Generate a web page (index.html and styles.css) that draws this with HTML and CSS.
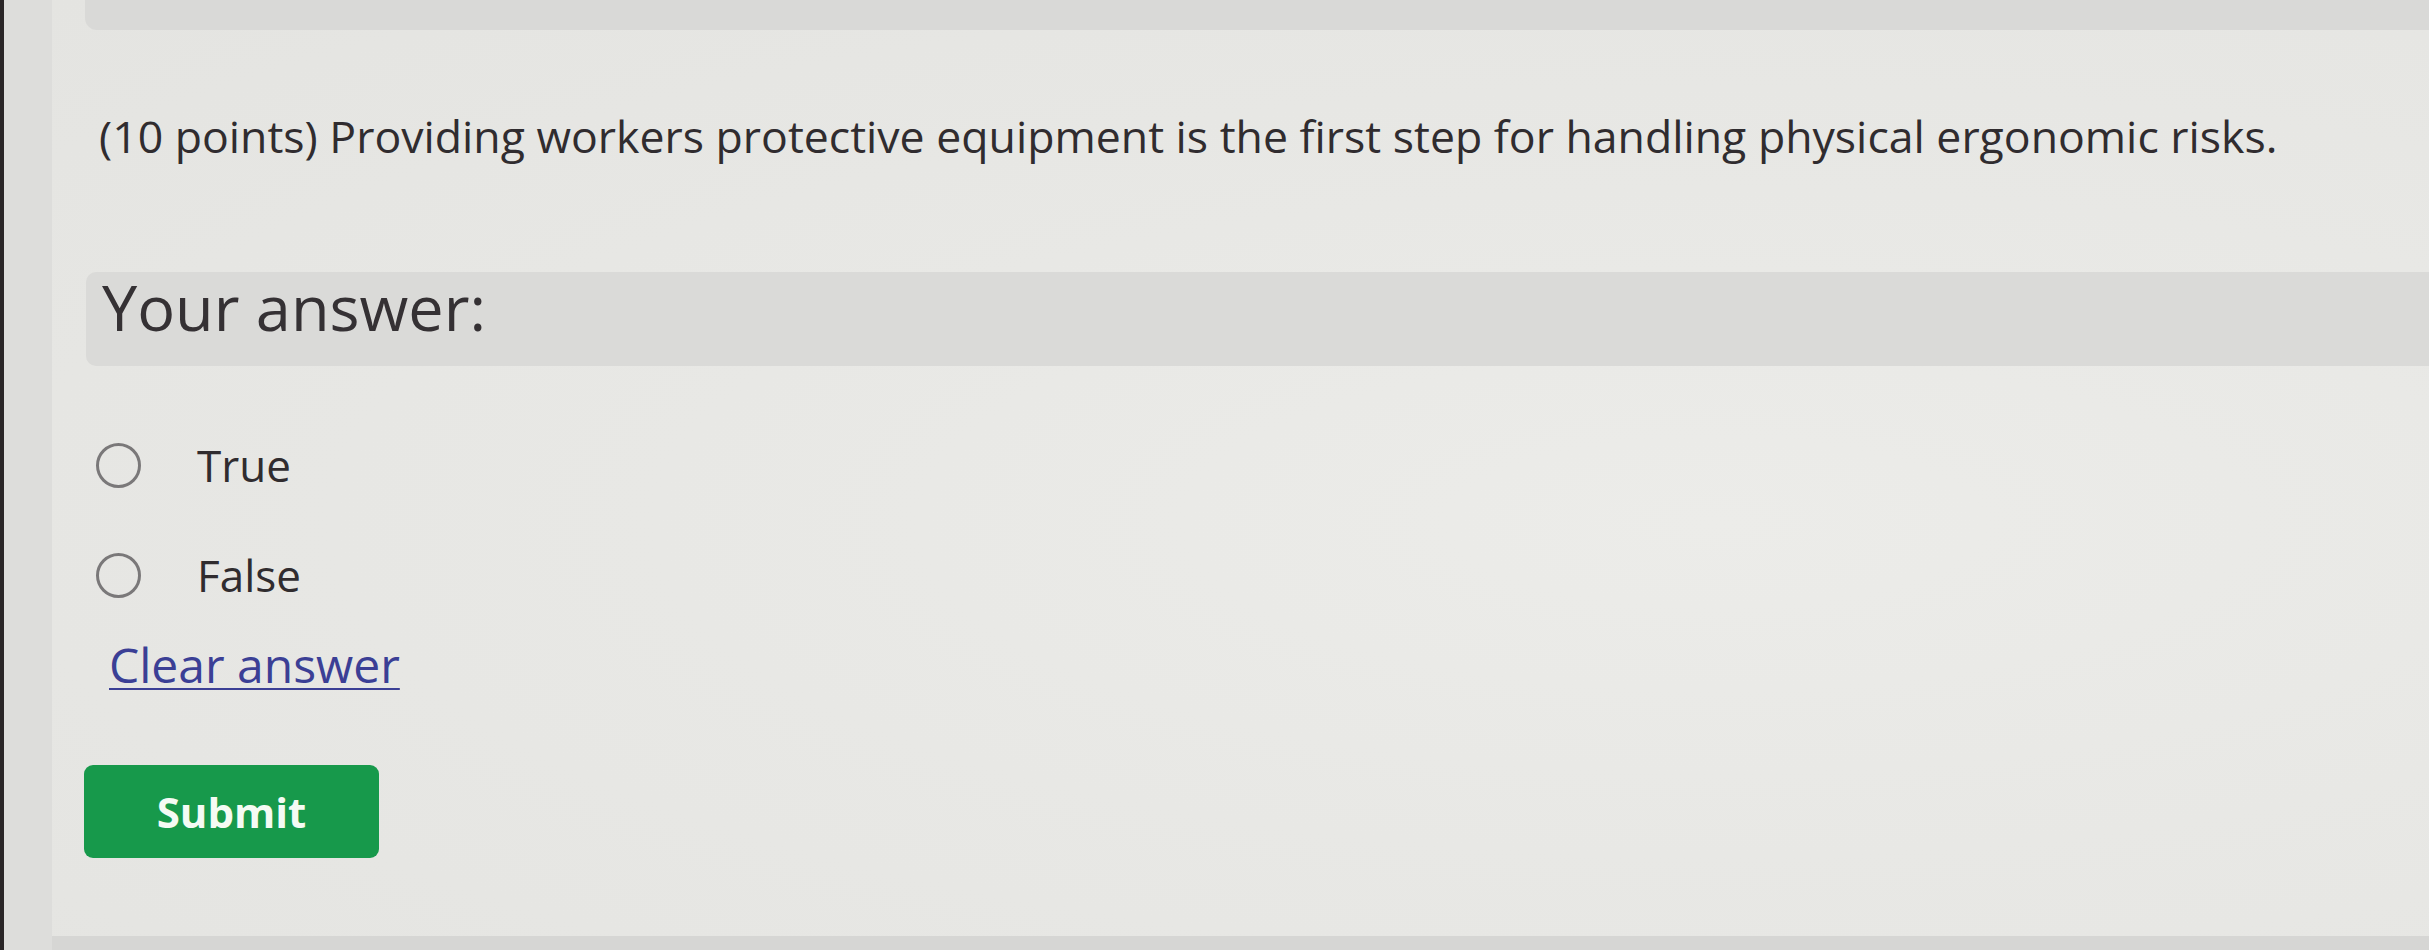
FILE: index.html
```html
<!DOCTYPE html>
<html lang="en">
<head>
<meta charset="utf-8">
<title>Question</title>
<link rel="stylesheet" href="styles.css">
</head>
<body>
<div class="screen">
  <div class="bezel"></div>
  <div class="gutter"></div>
  <main class="page">
    <div class="prev-card"></div>
    <div class="content">
      <p class="question">(10 points) Providing workers protective equipment is the first step for handling physical ergonomic risks.</p>
      <div class="answer-band">Your answer:</div>
      <div class="options">
        <label class="option"><span class="radio"></span><span class="opt-text">True</span></label>
        <label class="option"><span class="radio"></span><span class="opt-text">False</span></label>
      </div>
      <a class="clear" href="#">Clear answer</a>
      <button class="submit" type="button">Submit</button>
    </div>
    <div class="next-card"></div>
  </main>
</div>
</body>
</html>
```
FILE: styles.css
```css
html, body {
  margin: 0;
  padding: 0;
}
body {
  width: 2429px;
  height: 950px;
  overflow: hidden;
  font-family: "Open Sans", "Noto Sans", sans-serif;
  color: #302c2f;
  background: #dcdcda;
}
.screen {
  display: flex;
  height: 950px;
}
.bezel {
  width: 4px;
  background: #2a2627;
}
.gutter {
  width: 48px;
  background: #dddddb;
}
.page {
  flex: 1;
  display: flex;
  flex-direction: column;
  background: radial-gradient(ellipse at 70% 55%, #ecece9 0%, #e8e8e5 45%, #e4e4e1 100%);
}
.prev-card {
  height: 30px;
  margin-left: 33px;
  background: #d9d9d7;
  border-bottom-left-radius: 12px;
}
.content {
  padding-left: 32px;
  display: flex;
  flex-direction: column;
  align-items: flex-start;
}
.question {
  margin: 76px 0 0 15px;
  font-size: 44.6px;
  line-height: 60px;
  white-space: nowrap;
}
.answer-band {
  margin-top: 106px;
  align-self: stretch;
  margin-left: 2px;
  height: 70px;
  padding: 0 0 24px 16px;
  font-size: 63px;
  line-height: 70px;
  color: #353134;
  background: #dadad8;
  border-radius: 10px 0 0 10px;
}
.options {
  margin-top: 69px;
  padding-left: 12px;
  display: flex;
  flex-direction: column;
  gap: 50px;
}
.option {
  display: flex;
  align-items: center;
  height: 60px;
  gap: 56px;
}
.radio {
  width: 39px;
  height: 39px;
  border: 3.5px solid #7a7879;
  border-radius: 50%;
}
.opt-text {
  font-size: 44px;
  line-height: 60px;
}
.clear {
  margin: 30px 0 0 25px;
  font-size: 48px;
  line-height: 60px;
  color: #3b3f95;
  text-decoration: underline;
  text-decoration-thickness: 2px;
  text-underline-offset: 5px;
}
.submit {
  margin-top: 70px;
  width: 295px;
  height: 93px;
  border: none;
  border-radius: 9px;
  background: #17994b;
  color: #f4fbf4;
  font-family: "Open Sans", "Noto Sans", sans-serif;
  font-weight: 700;
  font-size: 42px;
  padding: 0;
}
.next-card {
  margin-top: auto;
  height: 14px;
  background: #d6d6d4;
}
```
